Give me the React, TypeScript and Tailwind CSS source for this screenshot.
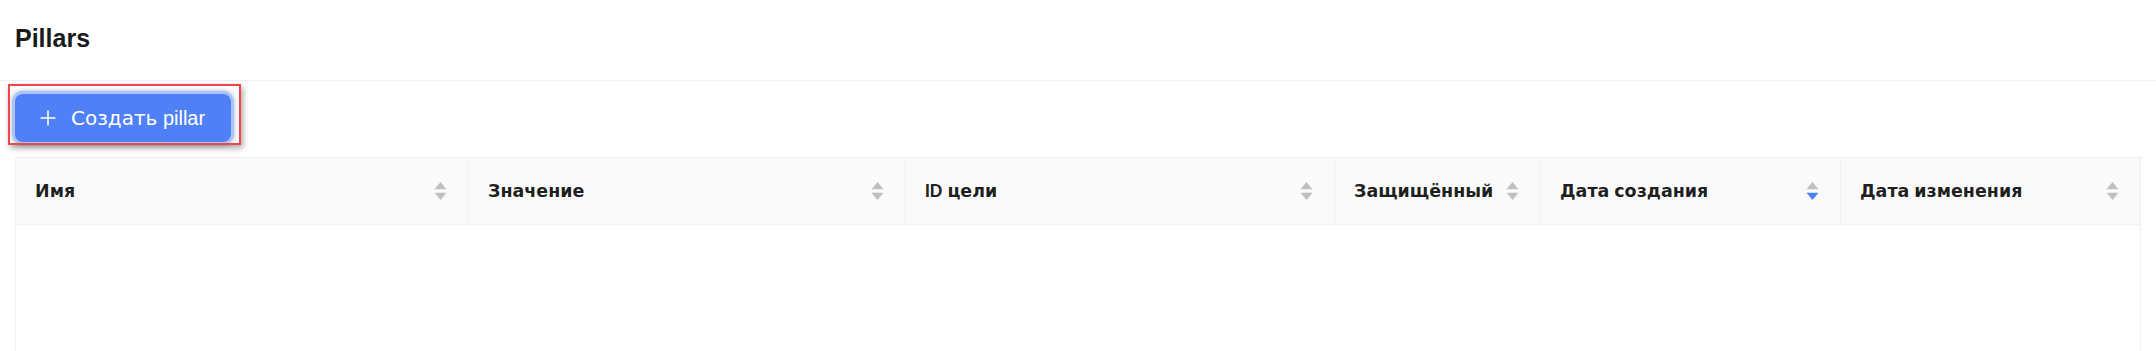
import React from "react";

const FONT = { fontFamily: '"Liberation Sans", Arial, sans-serif' };

function Mixed({ text }: { text: string }) {
  const parts = text.split(/([\u0400-\u04FF]+)/).filter((p) => p.length > 0);
  return (
    <>
      {parts.map((p, i) =>
        /[\u0400-\u04FF]/.test(p) ? (
          <span key={i} className="font-['DejaVu_Sans',sans-serif]">
            {p}
          </span>
        ) : (
          <span key={i}>{p}</span>
        )
      )}
    </>
  );
}

function Sorter({ active }: { active?: boolean }) {
  return (
    <svg width="13" height="20" viewBox="0 0 13 20" className="shrink-0">
      <path d="M6.5 1 L12.5 8.2 L0.5 8.2 Z" fill="#bfbfbf" />
      <path d="M0.5 11.8 L12.5 11.8 L6.5 19 Z" fill={active ? "#4f80f7" : "#bfbfbf"} />
    </svg>
  );
}

const cols: { title: string; active?: boolean }[] = [
  { title: "Имя" },
  { title: "Значение" },
  { title: "ID цели" },
  { title: "Защищённый" },
  { title: "Дата создания", active: true },
  { title: "Дата изменения" },
];

export default function App() {
  return (
    <div className="min-h-screen bg-white" style={FONT}>
      <div className="h-[81px] border-b border-[#f0f0f0] pl-[15px] pt-[24px]">
        <h1 className="text-[25px] leading-[28px] font-bold text-[#1a1a1a]">Pillars</h1>
      </div>

      <div className="pl-[15px] pt-[13px]">
        <div className="relative w-[216px]">
          <div className="absolute left-[-7px] top-[-10px] w-[233px] h-[61px] border-2 border-[#f04549] shadow-[2px_3px_6px_rgba(0,0,0,0.35)] pointer-events-none z-10" />
          <button className="flex items-center gap-[14px] w-[216px] h-[48px] pl-[24px] rounded-[8px] bg-[#4f80f7] text-white text-[20px] leading-[24px] whitespace-nowrap shadow-[0_0_0_3px_#aac4fa,0_0_5px_3px_rgba(70,90,130,0.45)]">
            <svg width="18" height="18" viewBox="0 0 18 18" className="shrink-0">
              <path d="M9 1.5 V16.5 M1.5 9 H16.5" stroke="white" strokeWidth="1.6" />
            </svg>
            <span>
              <Mixed text="Создать pillar" />
            </span>
          </button>
        </div>
      </div>

      <div className="px-[15px] mt-[15px]">
        <div className="border border-[#f0f0f0] border-b-0">
          <div className="grid grid-cols-[453px_437px_429px_206px_300px_1fr] bg-[#fafafa] border-b border-[#f0f0f0]">
            {cols.map((c, i) => (
              <div
                key={c.title}
                className={`flex items-center h-[66px] pl-[19px] pr-[21px] ${i < cols.length - 1 ? "border-r border-[#f0f0f0]" : ""}`}
              >
                <span className="flex-1 text-[17.5px] leading-[27px] font-bold text-[rgba(0,0,0,0.88)] whitespace-nowrap">
                  <Mixed text={c.title} />
                </span>
                <span className="ml-[10px] flex">
                  <Sorter active={c.active} />
                </span>
              </div>
            ))}
          </div>
          <div className="h-[200px] bg-white" />
        </div>
      </div>
    </div>
  );
}
